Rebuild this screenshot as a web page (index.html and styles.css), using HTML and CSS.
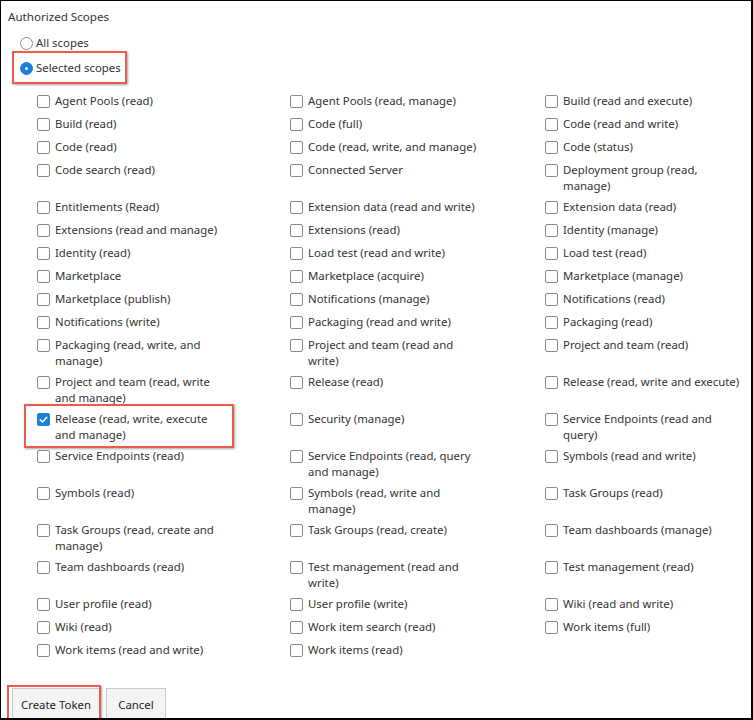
FILE: index.html
```html
<!DOCTYPE html>
<html>
<head>
<meta charset="utf-8">
<link rel="stylesheet" href="styles.css">
</head>
<body>
<div class="frame">
  <div class="title">Authorized Scopes</div>
  <div class="radios">
    <label class="radio"><span class="rdot"></span>All scopes</label>
    <label class="radio sel"><span class="rdot on"></span>Selected scopes</label>
  </div>
  <div class="grid">
    <div class="cell"><span class="cb"></span><span class="lbl">Agent Pools (read)</span></div>
    <div class="cell"><span class="cb"></span><span class="lbl">Agent Pools (read, manage)</span></div>
    <div class="cell"><span class="cb"></span><span class="lbl">Build (read and execute)</span></div>
    <div class="cell"><span class="cb"></span><span class="lbl">Build (read)</span></div>
    <div class="cell"><span class="cb"></span><span class="lbl">Code (full)</span></div>
    <div class="cell"><span class="cb"></span><span class="lbl">Code (read and write)</span></div>
    <div class="cell"><span class="cb"></span><span class="lbl">Code (read)</span></div>
    <div class="cell"><span class="cb"></span><span class="lbl">Code (read, write, and manage)</span></div>
    <div class="cell"><span class="cb"></span><span class="lbl">Code (status)</span></div>
    <div class="cell"><span class="cb"></span><span class="lbl">Code search (read)</span></div>
    <div class="cell"><span class="cb"></span><span class="lbl">Connected Server</span></div>
    <div class="cell"><span class="cb"></span><span class="lbl">Deployment group (read, manage)</span></div>
    <div class="cell"><span class="cb"></span><span class="lbl">Entitlements (Read)</span></div>
    <div class="cell"><span class="cb"></span><span class="lbl">Extension data (read and write)</span></div>
    <div class="cell"><span class="cb"></span><span class="lbl">Extension data (read)</span></div>
    <div class="cell"><span class="cb"></span><span class="lbl">Extensions (read and manage)</span></div>
    <div class="cell"><span class="cb"></span><span class="lbl">Extensions (read)</span></div>
    <div class="cell"><span class="cb"></span><span class="lbl">Identity (manage)</span></div>
    <div class="cell"><span class="cb"></span><span class="lbl">Identity (read)</span></div>
    <div class="cell"><span class="cb"></span><span class="lbl">Load test (read and write)</span></div>
    <div class="cell"><span class="cb"></span><span class="lbl">Load test (read)</span></div>
    <div class="cell"><span class="cb"></span><span class="lbl">Marketplace</span></div>
    <div class="cell"><span class="cb"></span><span class="lbl">Marketplace (acquire)</span></div>
    <div class="cell"><span class="cb"></span><span class="lbl">Marketplace (manage)</span></div>
    <div class="cell"><span class="cb"></span><span class="lbl">Marketplace (publish)</span></div>
    <div class="cell"><span class="cb"></span><span class="lbl">Notifications (manage)</span></div>
    <div class="cell"><span class="cb"></span><span class="lbl">Notifications (read)</span></div>
    <div class="cell"><span class="cb"></span><span class="lbl">Notifications (write)</span></div>
    <div class="cell"><span class="cb"></span><span class="lbl">Packaging (read and write)</span></div>
    <div class="cell"><span class="cb"></span><span class="lbl">Packaging (read)</span></div>
    <div class="cell"><span class="cb"></span><span class="lbl">Packaging (read, write, and manage)</span></div>
    <div class="cell"><span class="cb"></span><span class="lbl">Project and team (read and write)</span></div>
    <div class="cell"><span class="cb"></span><span class="lbl">Project and team (read)</span></div>
    <div class="cell"><span class="cb"></span><span class="lbl">Project and team (read, write and manage)</span></div>
    <div class="cell"><span class="cb"></span><span class="lbl">Release (read)</span></div>
    <div class="cell"><span class="cb"></span><span class="lbl">Release (read, write and execute)</span></div>
    <div class="cell hl"><span class="cb on"><svg viewBox="0 0 13 13" width="13" height="13"><path d="M3.2 6.8 L5.5 9 L9.8 4.2" fill="none" stroke="#fff" stroke-width="1.5" stroke-linecap="round" stroke-linejoin="round"/></svg></span><span class="lbl">Release (read, write, execute and manage)</span></div>
    <div class="cell"><span class="cb"></span><span class="lbl">Security (manage)</span></div>
    <div class="cell"><span class="cb"></span><span class="lbl">Service Endpoints (read and query)</span></div>
    <div class="cell"><span class="cb"></span><span class="lbl">Service Endpoints (read)</span></div>
    <div class="cell"><span class="cb"></span><span class="lbl">Service Endpoints (read, query and manage)</span></div>
    <div class="cell"><span class="cb"></span><span class="lbl">Symbols (read and write)</span></div>
    <div class="cell"><span class="cb"></span><span class="lbl">Symbols (read)</span></div>
    <div class="cell"><span class="cb"></span><span class="lbl">Symbols (read, write and manage)</span></div>
    <div class="cell"><span class="cb"></span><span class="lbl">Task Groups (read)</span></div>
    <div class="cell"><span class="cb"></span><span class="lbl">Task Groups (read, create and manage)</span></div>
    <div class="cell"><span class="cb"></span><span class="lbl">Task Groups (read, create)</span></div>
    <div class="cell"><span class="cb"></span><span class="lbl">Team dashboards (manage)</span></div>
    <div class="cell"><span class="cb"></span><span class="lbl">Team dashboards (read)</span></div>
    <div class="cell"><span class="cb"></span><span class="lbl">Test management (read and write)</span></div>
    <div class="cell"><span class="cb"></span><span class="lbl">Test management (read)</span></div>
    <div class="cell"><span class="cb"></span><span class="lbl">User profile (read)</span></div>
    <div class="cell"><span class="cb"></span><span class="lbl">User profile (write)</span></div>
    <div class="cell"><span class="cb"></span><span class="lbl">Wiki (read and write)</span></div>
    <div class="cell"><span class="cb"></span><span class="lbl">Wiki (read)</span></div>
    <div class="cell"><span class="cb"></span><span class="lbl">Work item search (read)</span></div>
    <div class="cell"><span class="cb"></span><span class="lbl">Work items (full)</span></div>
    <div class="cell"><span class="cb"></span><span class="lbl">Work items (read and write)</span></div>
    <div class="cell"><span class="cb"></span><span class="lbl">Work items (read)</span></div>
  </div>
  <div class="buttons">
    <button class="btn primary">Create Token</button>
    <button class="btn">Cancel</button>
  </div>
</div>
</body>
</html>
```

FILE: styles.css
```css
html, body {
  margin: 0;
  padding: 0;
  background: #fff;
}
body {
  font-family: "Noto Sans", "Open Sans", sans-serif;
  font-size: 11.4px;
  color: #333;
}
.frame {
  box-sizing: border-box;
  width: 753px;
  height: 720px;
  border: 1px solid #000;
  border-right-width: 2px;
  border-bottom-width: 2px;
  overflow: hidden;
  position: relative;
}
.title {
  padding: 8px 0 0 7px;
  font-size: 11.6px;
  line-height: 16px;
}
.radios {
  display: flex;
  flex-direction: column;
  align-items: flex-start;
  padding: 10px 0 0 19px;
  gap: 9px;
}
.radio {
  display: flex;
  align-items: center;
  gap: 3px;
  line-height: 16px;
  position: relative;
}
.radio.sel::after {
  content: "";
  position: absolute;
  left: -8px;
  top: -9px;
  right: -6px;
  bottom: -8px;
  border: 2px solid #ef5a4f;
  box-shadow: 1px 1px 2px rgba(0,0,0,0.35);
}
.rdot {
  width: 11px;
  height: 11px;
  border: 1px solid #8a8a8a;
  border-radius: 50%;
  box-sizing: content-box;
  position: relative;
}
.rdot.on {
  background: #1e7fd8;
  border-color: #1e7fd8;
}
.rdot.on::after {
  content: "";
  position: absolute;
  left: 4px;
  top: 4px;
  width: 3px;
  height: 3px;
  border-radius: 50%;
  background: #fff;
}
.grid {
  display: grid;
  grid-template-columns: 253px 255px 1fr;
  margin: 17px 0 0 36px;
}
.cell {
  display: flex;
  align-items: flex-start;
  gap: 5px;
  min-height: 23px;
  padding-bottom: 5px;
  box-sizing: border-box;
  line-height: 16px;
  position: relative;
}
.cb {
  flex: none;
  width: 11px;
  height: 11px;
  border: 1px solid #8a8a8a;
  border-radius: 2px;
  margin-top: 2px;
  box-sizing: content-box;
  position: relative;
}
.cb.on {
  background: #1e7fd8;
  border-color: #1e7fd8;
}
.cb svg {
  position: absolute;
  left: -1px;
  top: -1px;
}
.lbl {
  max-width: 174px;
}
.cell:nth-child(3n) .lbl {
  max-width: 180px;
}
.cell.hl::after {
  content: "";
  position: absolute;
  left: -13px;
  top: -7px;
  width: 206px;
  height: 40px;
  border: 2px solid #ef5a4f;
  box-shadow: 1px 1px 2px rgba(0,0,0,0.35);
}
.buttons {
  display: flex;
  gap: 6px;
  margin: 23px 0 0 11px;
}
.btn {
  font-family: "Noto Sans", "Open Sans", sans-serif;
  font-size: 11.4px;
  color: #222;
  background: #f4f4f4;
  border: 1px solid #c8c8c8;
  height: 32px;
  min-width: 60px;
  padding: 0 8px;
  position: relative;
}
.btn.primary {
  padding: 0 8px;
}
.btn.primary::after {
  content: "";
  position: absolute;
  left: -6px;
  top: -4px;
  right: -2px;
  bottom: -2px;
  border: 2px solid #ef5a4f;
  box-shadow: 1px 1px 2px rgba(0,0,0,0.35);
}
```
